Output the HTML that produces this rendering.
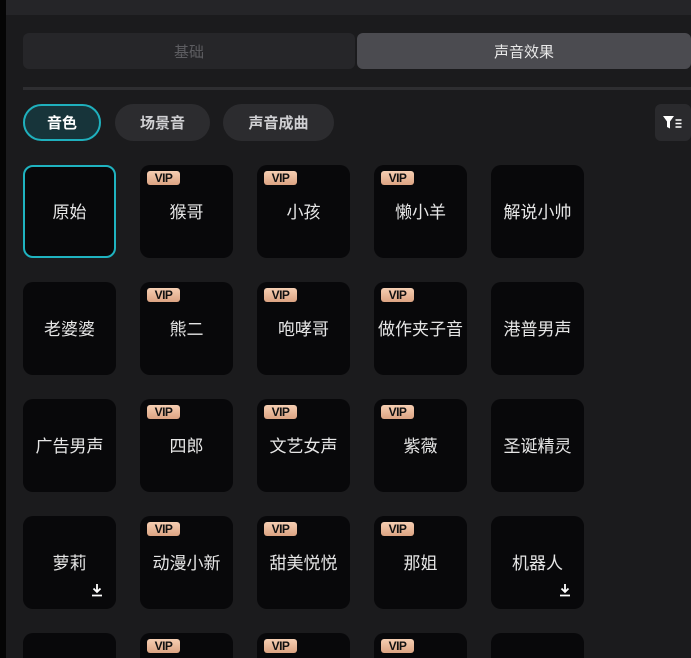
<!DOCTYPE html>
<html style="width:691px;height:658px;overflow:hidden;background:#1b1b1d"><head><meta charset="utf-8"><style>
*{margin:0;padding:0;box-sizing:border-box}
body{width:691px;height:658px;overflow:hidden;background:#1b1b1d;font-family:"Liberation Sans","Noto Sans CJK SC",sans-serif;position:relative}
.strip{position:absolute;left:0;top:0;width:6px;height:658px;background:#050505}
.top{position:absolute;left:6px;top:0;right:0;height:15px;background:#252528}
.tab{position:absolute;top:33px;height:36px;border-radius:6px;display:flex;align-items:center;justify-content:center;font-size:15px}
.sep{position:absolute;left:23px;right:0;top:87px;height:3px;background:#2e2e31}
.pill{position:absolute;top:104px;height:37px;border-radius:19px;background:#2c2c2f;color:#d0d0d3;font-weight:bold;font-size:15px;display:flex;align-items:center;justify-content:center}
.card{position:absolute;width:93px;height:93px;border-radius:10px;background:#08080a;color:#e6e6e6;font-size:17px;display:flex;align-items:center;justify-content:center;padding-bottom:3px}
.vip{position:absolute;left:7px;top:6px;width:33px;height:14px;border-radius:3px;background:linear-gradient(#f6cfb3,#dca382);color:#111;font:900 12px/14px "Liberation Sans",sans-serif;text-align:center;letter-spacing:-0.5px}
.dl{position:absolute;right:13px;bottom:12px;width:12px;height:14px}
</style></head><body>
<div class="strip"></div><div class="top"></div>
<div class="tab" style="left:23px;width:332px;background:#262629;color:#5d5d61">基础</div>
<div class="tab" style="left:357px;width:334px;background:#4b4b50;color:#e8e8e8">声音效果</div>
<div class="sep"></div>
<div class="pill" style="left:23px;width:78px;background:#17343a;border:2px solid #1fb0bd;color:#fff">音色</div>
<div class="pill" style="left:115px;width:95px">场景音</div>
<div class="pill" style="left:223px;width:111px">声音成曲</div>
<div style="position:absolute;left:655px;top:104px;width:36px;height:37px;border-radius:6px;background:#2a2a2d">
<svg width="36" height="37" viewBox="0 0 36 37"><path d="M8 12h11l-4 5.5v7l-3-1.5v-5.5z" fill="#fff"/><path d="M20.5 16h6M20.5 19.5h6M20.5 23h6" stroke="#fff" stroke-width="1.6"/></svg></div>
<div id="g"></div>
<script>
var rows=[["原始","猴哥","小孩","懒小羊","解说小帅"],["老婆婆","熊二","咆哮哥","做作夹子音","港普男声"],["广告男声","四郎","文艺女声","紫薇","圣诞精灵"],["萝莉","动漫小新","甜美悦悦","那姐","机器人"],["","","","",""]];
var h="";
rows.forEach(function(r,i){r.forEach(function(t,j){
var x=23+117*j,y=165+117*i;
var vip=(j>=1&&j<=3);
var st=(i==0&&j==0)?"border:2.5px solid #1fb3c0;":"";
if(i==4)st+="height:25px;border-bottom-left-radius:0;border-bottom-right-radius:0;";
var dl=(i==3&&(j==0||j==4))?'<svg class="dl" viewBox="0 0 12 14"><path d="M6 1v8M2.5 5.5L6 9l3.5-3.5M1 12.5h10" stroke="#fff" stroke-width="1.8" fill="none"/></svg>':"";
h+='<div class="card" style="left:'+x+'px;top:'+y+'px;'+st+'">'+(vip?'<div class="vip">VIP</div>':'')+t+dl+'</div>';
});});
document.getElementById("g").innerHTML=h;
</script>
</body></html>
